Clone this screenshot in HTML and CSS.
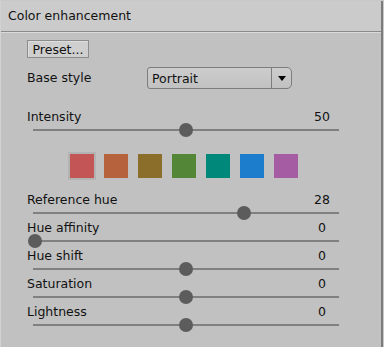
FILE: index.html
```html
<!DOCTYPE html>
<html lang="en">
<head>
  <meta charset="UTF-8">
  <title>Color enhancement</title>
  <link rel="stylesheet" href="styles.css">
</head>
<body>
  <div class="panel">
    <div class="title">Color enhancement</div>

    <div class="content">
      <div class="preset-button">Preset...</div>

      <div class="style-row">
        <div class="label">Base style</div>
        <div class="dropdown">
          <div class="dropdown-text">Portrait</div>
          <div class="dropdown-arrow">
            <svg width="8" height="5" viewBox="0 0 8 5"><path d="M0 0H8L4 5Z" fill="#000"/></svg>
          </div>
        </div>
      </div>

      <div class="param first">
        <div class="param-head"><span class="label">Intensity</span><span class="value">50</span></div>
        <div class="slider"><div class="track"></div><div class="knob" style="left: 152px"></div></div>
      </div>

      <div class="swatches">
        <div class="swatch selected" style="background: #c35557"></div>
        <div class="swatch" style="background: #b5623d"></div>
        <div class="swatch" style="background: #8b6e2a"></div>
        <div class="swatch" style="background: #548638"></div>
        <div class="swatch" style="background: #00897a"></div>
        <div class="swatch" style="background: #1b7dcb"></div>
        <div class="swatch" style="background: #a65ca2"></div>
      </div>

      <div class="param">
        <div class="param-head"><span class="label">Reference hue</span><span class="value">28</span></div>
        <div class="slider"><div class="track"></div><div class="knob" style="left: 210px"></div></div>
      </div>
      <div class="param">
        <div class="param-head"><span class="label">Hue affinity</span><span class="value">0</span></div>
        <div class="slider"><div class="track"></div><div class="knob" style="left: 1px"></div></div>
      </div>
      <div class="param">
        <div class="param-head"><span class="label">Hue shift</span><span class="value">0</span></div>
        <div class="slider"><div class="track"></div><div class="knob" style="left: 152px"></div></div>
      </div>
      <div class="param">
        <div class="param-head"><span class="label">Saturation</span><span class="value">0</span></div>
        <div class="slider"><div class="track"></div><div class="knob" style="left: 152px"></div></div>
      </div>
      <div class="param">
        <div class="param-head"><span class="label">Lightness</span><span class="value">0</span></div>
        <div class="slider"><div class="track"></div><div class="knob" style="left: 152px"></div></div>
      </div>
    </div>
  </div>
</body>
</html>
```

FILE: styles.css
```css
body {
  margin: 0;
  background-color: #c8c8c8;
  font-family: 'DejaVu Sans', sans-serif;
  font-size: 12.5px;
  line-height: 14px;
  color: #111;
}

.panel {
  width: 383px;
  height: 347px;
  box-sizing: border-box;
  background-color: #c1c1c1;
  border-left: 1px solid #d2d2d2;
  border-right: 2px solid #7c7c7c;
  border-bottom: 1px solid #7c7c7c;
}

.title {
  height: 30px;
  line-height: 30px;
  margin-top: 1px;
  padding-left: 7px;
  background-color: #cbcbcb;
  border-bottom: 1px solid #8a8a8a;
  box-shadow: 0 1px 0 #dadada;
}

.content {
  padding-top: 8px;
}

.preset-button {
  width: 60px;
  height: 16px;
  line-height: 17px;
  margin-left: 26px;
  text-align: center;
  background-color: #cfcfcf;
  border: 1px solid #8c8c8c;
  box-shadow: inset 1px 1px 0 #dedede;
}

.style-row {
  display: flex;
  align-items: center;
  margin-top: 9px;
  margin-left: 26px;
}

.style-row .label {
  width: 120px;
  line-height: 18px;
}

.dropdown {
  display: flex;
  width: 143px;
  height: 20px;
  border: 1px solid #7d7d7d;
  border-radius: 3px 5px 5px 3px;
  background: linear-gradient(#cdcdcd, #c1c1c1);
}

.dropdown-text {
  flex: 1;
  line-height: 21px;
  padding-left: 4px;
  border-right: 1px solid #7d7d7d;
}

.dropdown-arrow {
  width: 19px;
  display: flex;
  align-items: center;
  justify-content: center;
}

.param.first {
  margin-top: 20px;
}

.param-head {
  display: flex;
  justify-content: space-between;
  width: 310px;
  height: 14px;
  line-height: 16px;
  margin-left: 26px;
}

.value {
  width: 30px;
  text-align: center;
}

.slider {
  position: relative;
  width: 317px;
  height: 14px;
  margin-left: 26px;
}

.track {
  position: absolute;
  left: 6px;
  right: 5px;
  top: 6px;
  height: 2px;
  background-color: #808080;
}

.knob {
  position: absolute;
  top: 0;
  width: 14px;
  height: 14px;
  border-radius: 50%;
  background-color: #5c5c5c;
}

.swatches {
  display: flex;
  gap: 10px;
  margin: 17px 0 14px 69px;
}

.swatch {
  width: 24px;
  height: 24px;
}

.swatch.selected {
  box-shadow: 0 0 0 2px #b2b2b2;
}
```
